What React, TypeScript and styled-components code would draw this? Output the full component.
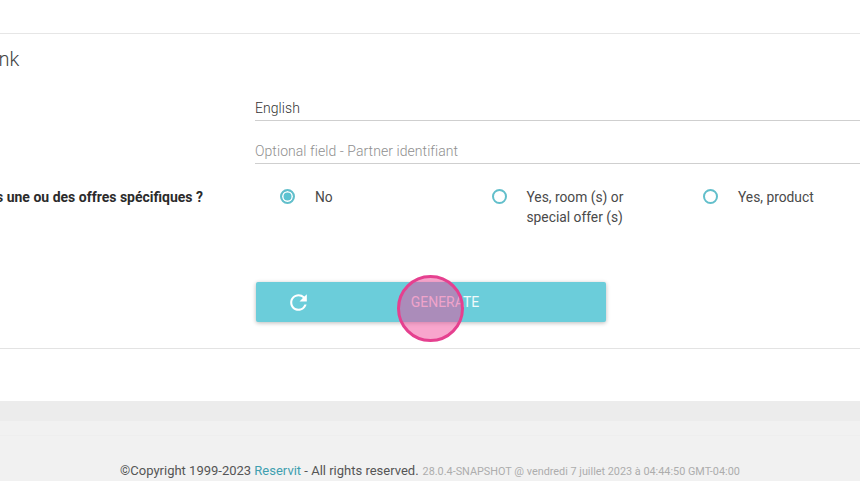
import * as React from "react";
import styled, { createGlobalStyle } from "styled-components";
import { MdRefresh } from "react-icons/md";

const GlobalStyle = createGlobalStyle`
  html, body {
    margin: 0;
    padding: 0;
    height: 100%;
    overflow: hidden;
    background: #fff;
    font-family: Roboto, "Liberation Sans", sans-serif;
  }
`;

const Page = styled.div`
  position: relative;
  width: 860px;
  height: 481px;
  overflow: hidden;
`;

const TopBar = styled.div`
  height: 33px;
  border-bottom: 1px solid #e6e6e6;
`;

const Panel = styled.section`
  height: 314px;
  border-bottom: 1px solid #e3e3e3;
  overflow: hidden;
`;

const Title = styled.h2`
  margin: 0;
  padding-top: 13px;
  height: 50px;
  box-sizing: border-box;
  font-size: 20px;
  line-height: 24px;
  font-weight: 300;
  color: #444;
  text-indent: -16.5px;
`;

const FormRow = styled.div<{ $height: number }>`
  display: flex;
  height: ${(p) => p.$height}px;
`;

const Label = styled.div`
  flex: 0 0 203px;
  min-width: 0;
  padding-top: 17px;
  display: flex;
  justify-content: flex-end;
  font-size: 14px;
  line-height: 20px;
  font-weight: 700;
  color: #2b2b2b;
  white-space: nowrap;
`;

const Field = styled.div<{ $muted?: boolean }>`
  flex: 1;
  margin-left: 52px;
  height: 22px;
  padding-top: 14px;
  border-bottom: 1px solid #cfcfcf;
  font-size: 14px;
  line-height: 20px;
  font-weight: 300;
  letter-spacing: 0.06px;
  color: ${(p) => (p.$muted ? "#8f8f8f" : "#333")};
`;

const RadioGroup = styled.div`
  margin-left: 77px;
  padding-top: 17px;
  display: grid;
  grid-template-columns: repeat(3, 211.5px);
  align-items: start;
`;

const RadioOption = styled.div`
  display: flex;
  align-items: flex-start;
  gap: 20px;
  padding-right: 52px;
`;

const RadioCircle = styled.span<{ $checked?: boolean }>`
  flex: 0 0 15px;
  width: 15px;
  height: 15px;
  margin-top: 2px;
  box-sizing: border-box;
  border: 2px solid #62bfcb;
  border-radius: 50%;
  background: ${(p) => (p.$checked ? "#5cc3d1" : "#fff")};
  box-shadow: ${(p) => (p.$checked ? "inset 0 0 0 1.5px #fff" : "none")};
`;

const RadioText = styled.span`
  font-size: 13.8px;
  line-height: 20px;
  color: #4a4a4a;
`;

const ButtonRow = styled.div`
  margin-left: 256px;
`;

const GenerateButton = styled.button`
  display: flex;
  align-items: center;
  width: 350px;
  height: 40px;
  padding: 0;
  border: 0;
  border-radius: 2px;
  background: #6bcdda;
  box-shadow: 0 1px 4px rgba(0, 0, 0, 0.28);
  color: #fff;
  font-family: inherit;
  font-size: 14px;
`;

const ButtonIcon = styled.span`
  flex: 0 0 84px;
  display: flex;
  justify-content: center;
  stroke: #fff;
  stroke-width: 0.8px;
`;

const ButtonText = styled.span`
  flex: 1;
  text-align: center;
  padding-right: 84px;
  padding-left: 28px;
  box-sizing: border-box;
  opacity: 0.9;
`;

const Spacer = styled.div`
  height: 52px;
`;

const FooterBand = styled.div`
  height: 20px;
  background: #ececec;
`;

const Footer = styled.footer`
  height: 60px;
  background: #f1f1f1;
`;

const FooterRule = styled.div`
  height: 14px;
  border-bottom: 1px solid #eeeeee;
`;

const FooterLine = styled.div`
  margin-top: 27px;
  display: flex;
  justify-content: center;
  align-items: baseline;
  gap: 4px;
  font-size: 13px;
  line-height: 16px;
  color: #555;
  white-space: nowrap;
`;

const FooterLink = styled.a`
  color: #3f9fb0;
`;

const Version = styled.span`
  font-size: 10.85px;
  color: #adadad;
`;

const ClickMarker = styled.div`
  position: absolute;
  left: 397px;
  top: 275px;
  width: 67px;
  height: 67px;
  box-sizing: border-box;
  border: 3px solid #e5408f;
  border-radius: 50%;
  background: rgba(240, 70, 150, 0.48);
`;

export default function App() {
  return (
    <Page>
      <GlobalStyle />
      <TopBar />
      <Panel>
        <Title>Link</Title>
        <FormRow $height={43}>
          <Label />
          <Field>English</Field>
        </FormRow>
        <FormRow $height={43}>
          <Label />
          <Field $muted>Optional field - Partner identifiant</Field>
        </FormRow>
        <FormRow $height={112}>
          <Label>Souhaitez-vous une ou des offres spécifiques ?</Label>
          <RadioGroup>
            <RadioOption>
              <RadioCircle $checked />
              <RadioText>No</RadioText>
            </RadioOption>
            <RadioOption>
              <RadioCircle />
              <RadioText>Yes, room (s) or special offer (s)</RadioText>
            </RadioOption>
            <RadioOption>
              <RadioCircle />
              <RadioText>Yes, product</RadioText>
            </RadioOption>
          </RadioGroup>
        </FormRow>
        <ButtonRow>
          <GenerateButton>
            <ButtonIcon>
              <MdRefresh size={25} />
            </ButtonIcon>
            <ButtonText>GENERATE</ButtonText>
          </GenerateButton>
        </ButtonRow>
      </Panel>
      <Spacer />
      <FooterBand />
      <Footer>
        <FooterRule />
        <FooterLine>
          <span>
            ©Copyright 1999-2023 <FooterLink>Reservit</FooterLink> - All rights reserved.
          </span>
          <Version>28.0.4-SNAPSHOT @ vendredi 7 juillet 2023 à 04:44:50 GMT-04:00</Version>
        </FooterLine>
      </Footer>
      <ClickMarker />
    </Page>
  );
}
